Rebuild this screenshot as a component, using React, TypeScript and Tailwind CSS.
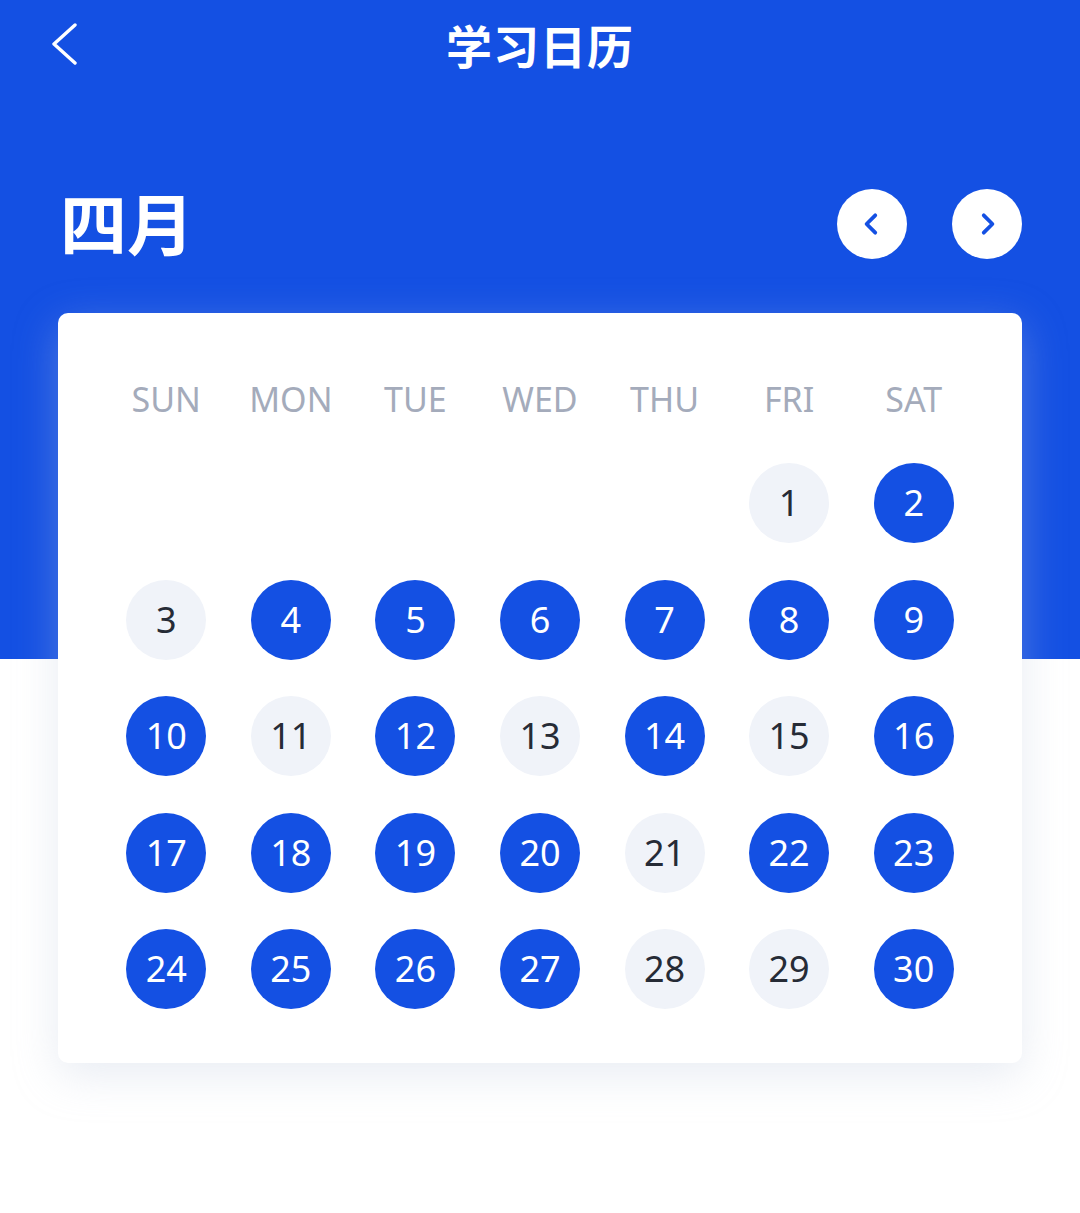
import React from "react";

// Days studied in April; the rest are shown as grey pills
const STUDIED = new Set([2, 4, 5, 6, 7, 8, 9, 10, 12, 14, 16, 17, 18, 19, 20, 22, 23, 24, 25, 26, 27, 30]);
const WEEKDAYS = ["SUN", "MON", "TUE", "WED", "THU", "FRI", "SAT"];
const FIRST_WEEKDAY = 5; // April 1st falls on a Friday
const DAYS_IN_MONTH = 30;

function Chevron({ dir, className }: { dir: "left" | "right"; className?: string }) {
  return (
    <svg viewBox="0 0 24 24" className={className} fill="none" stroke="currentColor" strokeLinecap="round" strokeLinejoin="round">
      {dir === "left" ? <polyline points="15,4 7,12 15,20" /> : <polyline points="9,4 17,12 9,20" />}
    </svg>
  );
}

export default function App() {
  const cells: (number | null)[] = [
    ...Array.from({ length: FIRST_WEEKDAY }, () => null),
    ...Array.from({ length: DAYS_IN_MONTH }, (_, i) => i + 1),
  ];

  return (
    <div
      className="min-h-[1213px] w-full bg-[linear-gradient(to_bottom,#1450e3_659px,#ffffff_659px)]"
      style={{ fontFamily: '"Noto Sans", "Noto Sans CJK SC", sans-serif' }}
    >
      {/* Top bar */}
      <div className="relative flex h-[92px] items-center justify-center">
        <button className="absolute left-[50px] top-[23px] text-white">
          <svg viewBox="0 0 28 42" className="h-[42px] w-[28px]" fill="none" stroke="currentColor" strokeWidth={3.4} strokeLinecap="round" strokeLinejoin="round">
            <polyline points="25,2 4,21 25,40" />
          </svg>
        </button>
        <h1 className="text-[46px] font-bold leading-none tracking-[1px] text-white">学习日历</h1>
      </div>

      {/* Month switcher */}
      <div className="flex items-center justify-between pl-[60px] pr-[58px] pt-[97px]">
        <h2 className="text-[67px] font-bold leading-[70px] text-white">四月</h2>
        <div className="flex gap-[45px]">
          <button className="flex h-[70px] w-[70px] items-center justify-center rounded-full bg-white text-[#1450e3]">
            <Chevron dir="left" className="h-[26px] w-[26px] stroke-[3.5]" />
          </button>
          <button className="flex h-[70px] w-[70px] items-center justify-center rounded-full bg-white text-[#1450e3]">
            <Chevron dir="right" className="h-[26px] w-[26px] stroke-[3.5]" />
          </button>
        </div>
      </div>

      {/* Calendar card */}
      <div className="mx-[58px] mt-[54px] rounded-[10px] bg-white px-[46px] pb-[54px] pt-[66px] shadow-[0_12px_44px_rgba(190,200,220,0.35)]">
        <div className="grid grid-cols-7">
          {WEEKDAYS.map((d) => (
            <div key={d} className="text-center text-[34px] leading-[40px] text-[#a4abbb]">
              {d}
            </div>
          ))}
        </div>
        <div className="mt-[44px] grid grid-cols-7 gap-y-[36.5px]">
          {cells.map((day, i) => (
            <div key={i} className="flex h-[80px] items-center justify-center">
              {day !== null && (
                <div
                  className={
                    STUDIED.has(day)
                      ? "flex h-[80px] w-[80px] items-center justify-center rounded-full bg-[#1450e3] text-[36px] text-white"
                      : "flex h-[80px] w-[80px] items-center justify-center rounded-full bg-[#f0f3f9] text-[36px] text-[#262b36]"
                  }
                >
                  {day}
                </div>
              )}
            </div>
          ))}
        </div>
      </div>
    </div>
  );
}
